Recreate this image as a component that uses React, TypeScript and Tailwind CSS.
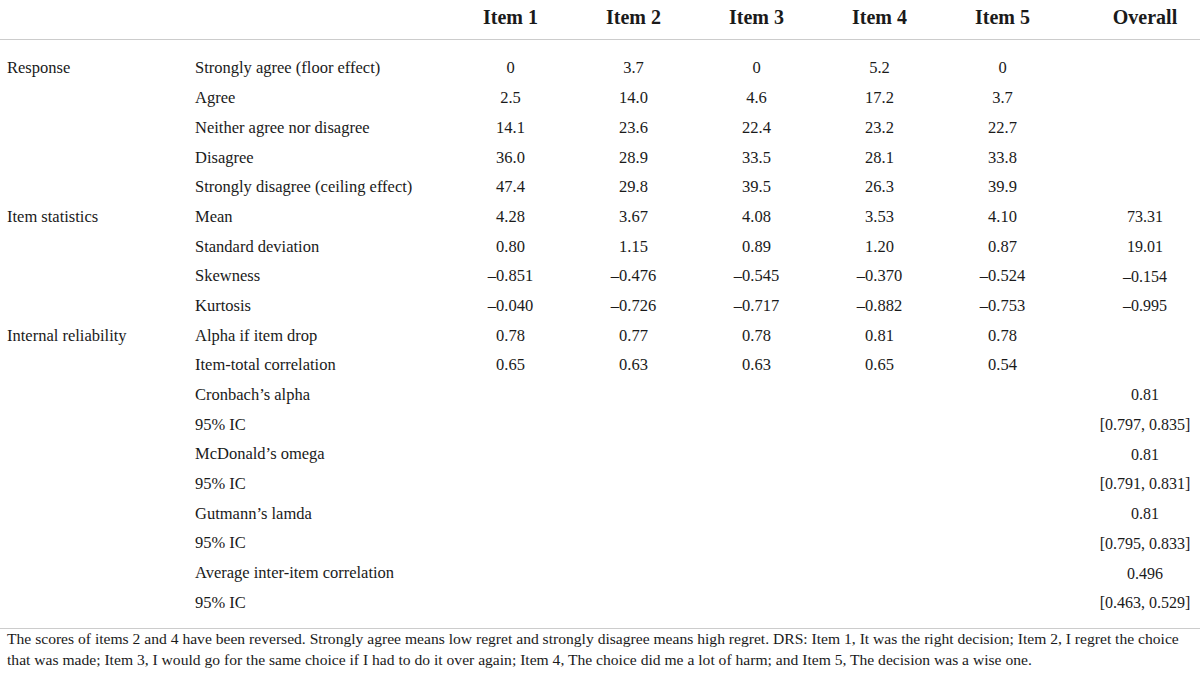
import React from "react";

type Row = { group?: string; label: string; vals: string[]; overall?: string };

const rows: Row[] = [
  { group: "Response", label: "Strongly agree (floor effect)", vals: ["0", "3.7", "0", "5.2", "0"] },
  { label: "Agree", vals: ["2.5", "14.0", "4.6", "17.2", "3.7"] },
  { label: "Neither agree nor disagree", vals: ["14.1", "23.6", "22.4", "23.2", "22.7"] },
  { label: "Disagree", vals: ["36.0", "28.9", "33.5", "28.1", "33.8"] },
  { label: "Strongly disagree (ceiling effect)", vals: ["47.4", "29.8", "39.5", "26.3", "39.9"] },
  { group: "Item statistics", label: "Mean", vals: ["4.28", "3.67", "4.08", "3.53", "4.10"], overall: "73.31" },
  { label: "Standard deviation", vals: ["0.80", "1.15", "0.89", "1.20", "0.87"], overall: "19.01" },
  { label: "Skewness", vals: ["\u20130.851", "\u20130.476", "\u20130.545", "\u20130.370", "\u20130.524"], overall: "\u20130.154" },
  { label: "Kurtosis", vals: ["\u20130.040", "\u20130.726", "\u20130.717", "\u20130.882", "\u20130.753"], overall: "\u20130.995" },
  { group: "Internal reliability", label: "Alpha if item drop", vals: ["0.78", "0.77", "0.78", "0.81", "0.78"] },
  { label: "Item-total correlation", vals: ["0.65", "0.63", "0.63", "0.65", "0.54"] },
  { label: "Cronbach\u2019s alpha", vals: ["", "", "", "", ""], overall: "0.81" },
  { label: "95% IC", vals: ["", "", "", "", ""], overall: "[0.797, 0.835]" },
  { label: "McDonald\u2019s omega", vals: ["", "", "", "", ""], overall: "0.81" },
  { label: "95% IC", vals: ["", "", "", "", ""], overall: "[0.791, 0.831]" },
  { label: "Gutmann\u2019s lamda", vals: ["", "", "", "", ""], overall: "0.81" },
  { label: "95% IC", vals: ["", "", "", "", ""], overall: "[0.795, 0.833]" },
  { label: "Average inter-item correlation", vals: ["", "", "", "", ""], overall: "0.496" },
  { label: "95% IC", vals: ["", "", "", "", ""], overall: "[0.463, 0.529]" },
];

const grid = "grid grid-cols-[188px_261px_123px_123px_123px_123px_123px_1fr]";

export default function App() {
  return (
    <div
      className="w-[1200px] h-[683px] bg-white text-[#1a1a1a] overflow-hidden"
      style={{ fontFamily: '"Liberation Serif", "Times New Roman", serif' }}
    >
      <div className={`${grid} h-[40px] items-center pb-[6px] border-b border-[#cccccc] text-[20px] font-bold`}>
        <div />
        <div />
        {["Item 1", "Item 2", "Item 3", "Item 4", "Item 5"].map((h) => (
          <div key={h} className="text-center">{h}</div>
        ))}
        <div className="text-center pl-[26px]">Overall</div>
      </div>
      <div className="pt-[14px] pb-[10px] border-b border-[#cccccc] text-[16.5px]">
        {rows.map((r, i) => (
          <div key={i} className={`${grid} h-[29.7px] items-center`}>
            <div className="pl-[7px] whitespace-nowrap">{r.group ?? ""}</div>
            <div className="pl-[7px] whitespace-nowrap">{r.label}</div>
            {r.vals.map((v, j) => (
              <div key={j} className="text-center">{v}</div>
            ))}
            <div className="text-center pl-[26px] whitespace-nowrap text-[16px]">{r.overall ?? ""}</div>
          </div>
        ))}
      </div>
      <div className="px-[7px] -mt-[1px] text-[15.6px] leading-[21px] whitespace-nowrap">
        The scores of items 2 and 4 have been reversed. Strongly agree means low regret and strongly disagree means high regret. DRS: Item 1, It was the right decision; Item 2, I regret the choice
        <br />
        that was made; Item 3, I would go for the same choice if I had to do it over again; Item 4, The choice did me a lot of harm; and Item 5, The decision was a wise one.
      </div>
    </div>
  );
}
